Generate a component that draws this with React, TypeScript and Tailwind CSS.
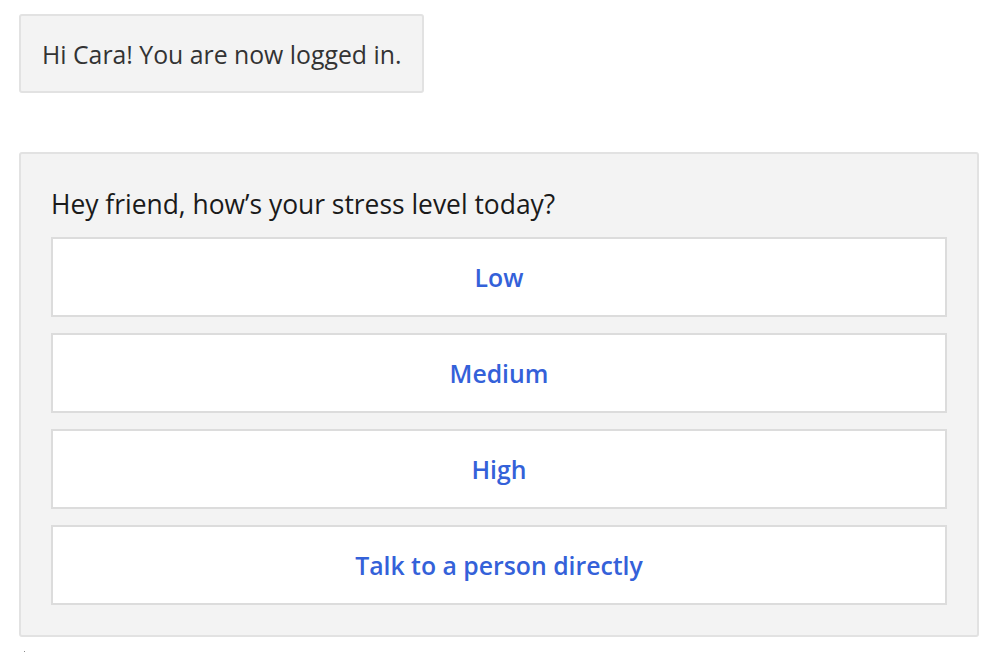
import React from "react";

const options = ["Low", "Medium", "High", "Talk to a person directly"];

export default function App() {
  return (
    <div
      className="w-[995px] h-[655px] bg-white overflow-hidden pl-[19px] pt-[14px]"
      style={{ fontFamily: '"Open Sans", "Noto Sans", sans-serif' }}
    >
      <div className="w-[405px] h-[79px] bg-[#f3f3f3] border-2 border-[#e2e2e2] rounded-[3px] flex items-center pl-[21px] pt-[2px] text-[24.8px] text-[#333333]">
        Hi Cara! You are now logged in.
      </div>
      <div className="mt-[59px] w-[960px] bg-[#f3f3f3] border-2 border-[#e2e2e2] rounded-[3px] px-[30px] pt-[34px] pb-[30px]">
        <div className="h-[32px] leading-[32px] text-[26.4px] text-[#1a1a1a] mb-[17px]">
          Hey friend, how’s your stress level today?
        </div>
        <div className="flex flex-col gap-[16px]">
          {options.map((o) => (
            <button
              key={o}
              className="h-[80px] w-full bg-white border-2 border-[#dcdcdc] flex items-center justify-center pt-[2px] text-[24.8px] font-semibold text-[#3461d9]"
            >
              {o}
            </button>
          ))}
        </div>
      </div>
      <div className="mt-[14px] ml-[5px] w-[1px] h-[1px] bg-[#888]" />
    </div>
  );
}
